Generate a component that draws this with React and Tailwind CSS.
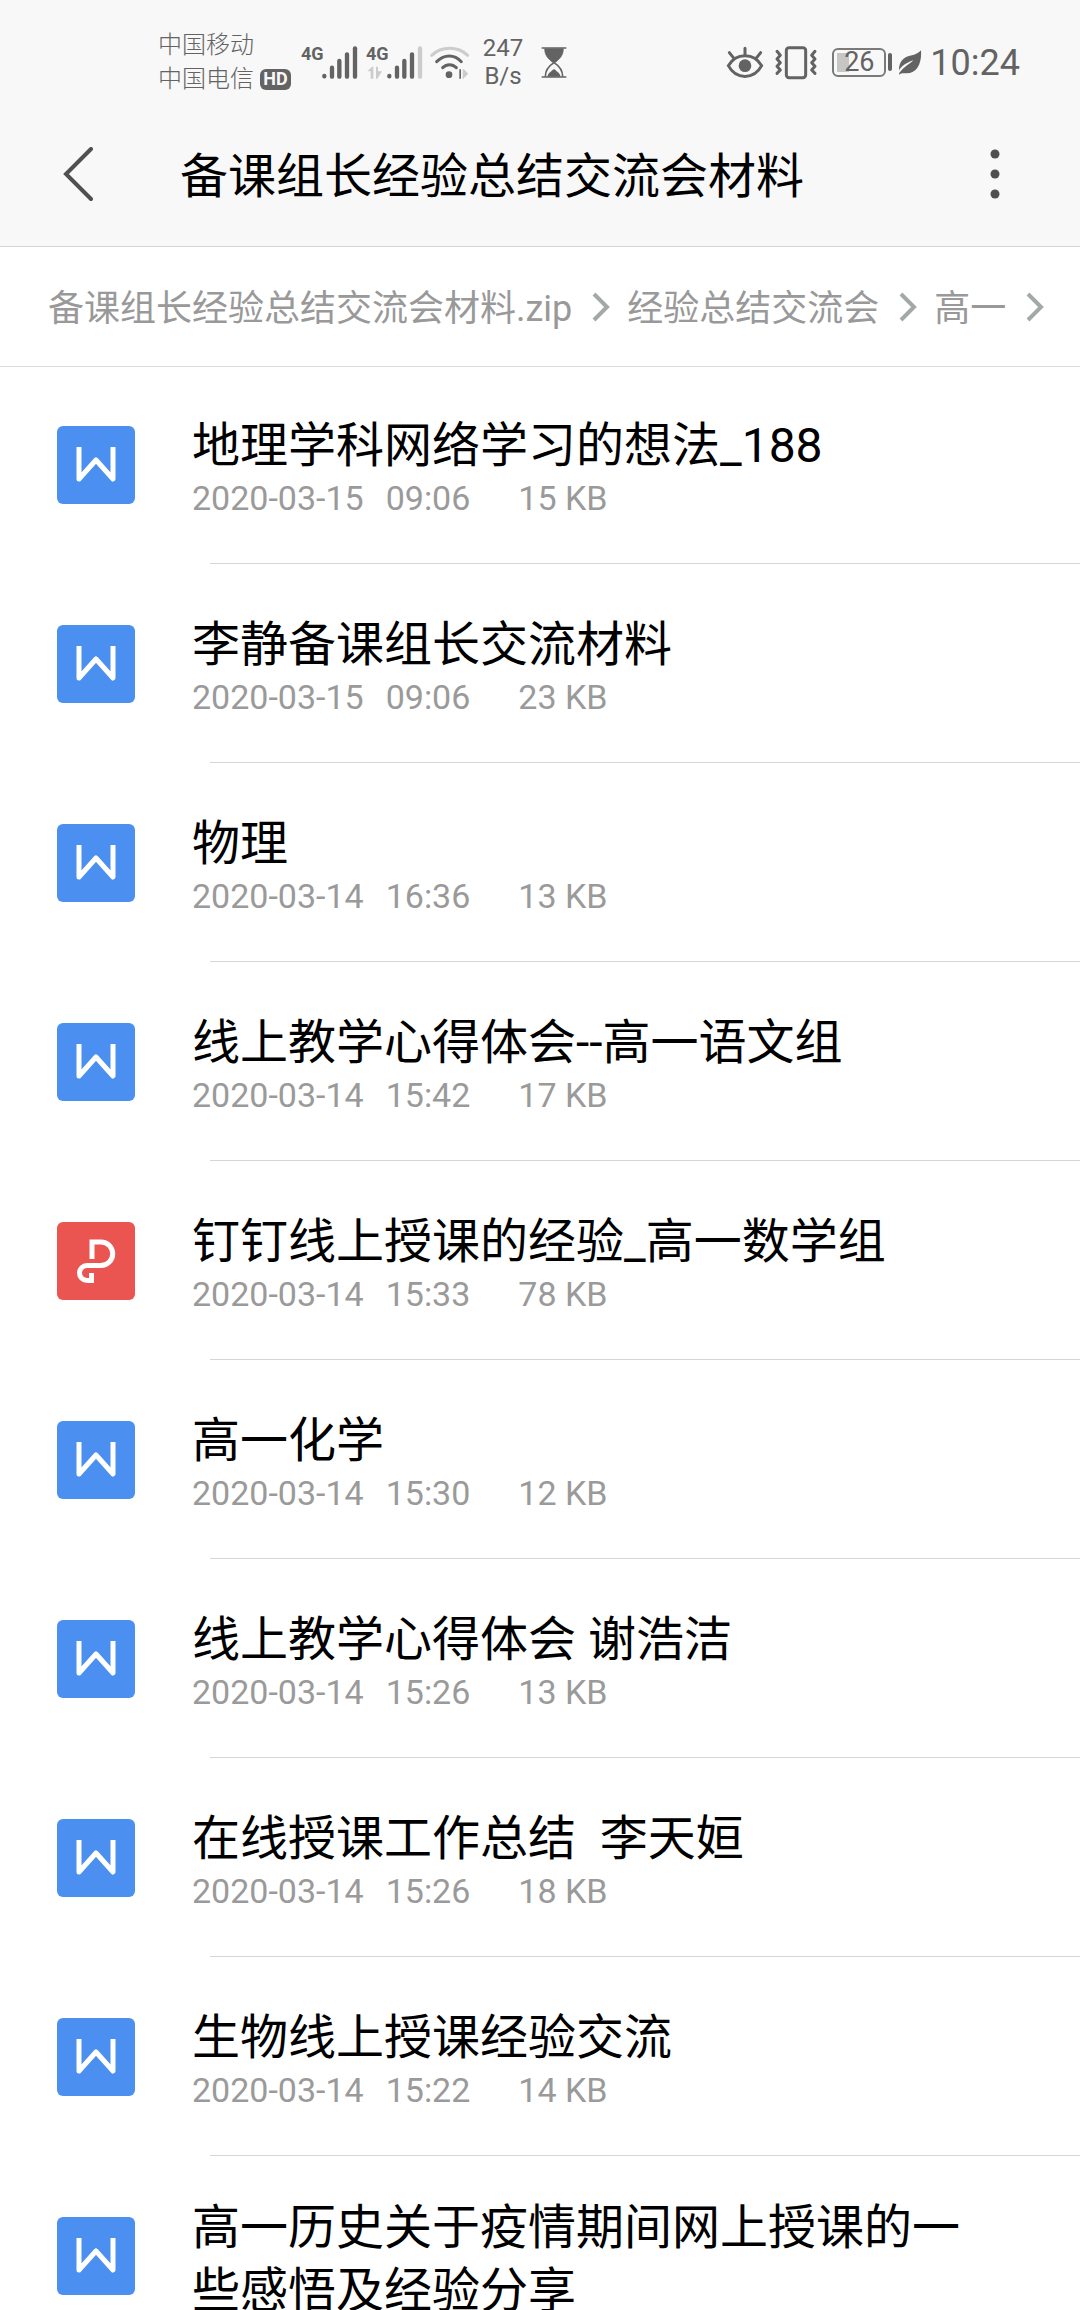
import { useState } from "react";

const files = [
  { name: "地理学科网络学习的想法_188", date: "2020-03-15", time: "09:06", size: "15 KB", type: "doc" },
  { name: "李静备课组长交流材料", date: "2020-03-15", time: "09:06", size: "23 KB", type: "doc" },
  { name: "物理", date: "2020-03-14", time: "16:36", size: "13 KB", type: "doc" },
  { name: "线上教学心得体会--高一语文组", date: "2020-03-14", time: "15:42", size: "17 KB", type: "doc" },
  { name: "钉钉线上授课的经验_高一数学组", date: "2020-03-14", time: "15:33", size: "78 KB", type: "pdf" },
  { name: "高一化学", date: "2020-03-14", time: "15:30", size: "12 KB", type: "doc" },
  { name: "线上教学心得体会 谢浩洁", date: "2020-03-14", time: "15:26", size: "13 KB", type: "doc" },
  { name: "在线授课工作总结  李天姮", date: "2020-03-14", time: "15:26", size: "18 KB", type: "doc" },
  { name: "生物线上授课经验交流", date: "2020-03-14", time: "15:22", size: "14 KB", type: "doc" },
  { name: "高一历史关于疫情期间网上授课的一些感悟及经验分享", type: "doc" },
];

const crumbs = ["备课组长经验总结交流会材料.zip", "经验总结交流会", "高一"];

const SignalBars = ({ weak }) => (
  <svg className="w-[37px] h-[35px]" viewBox="0 0 111 105" fill="none" stroke="#636363" strokeWidth="13" strokeLinecap="round">
    <path d="M10 93V94M33 68V95M55 48V95M78 28V95" />
    <path d="M102 10V95" stroke={weak ? "#cccccc" : "#636363"} />
  </svg>
);

const WifiIcon = () => (
  <svg className="w-[41px] h-[35px]" viewBox="0 0 123 105" fill="none" strokeLinecap="round" strokeWidth="9">
    <path d="M8 31C38 3 86 3 116 31" stroke="#cccccc" />
    <path d="M23 50C46 27 76 27 97 50M41 68C53 56 70 56 82 68" stroke="#636363" />
    <circle cx="60" cy="89" r="10" fill="#636363" />
    <path d="M78 86L91 73V101H96V73H91Z" fill="#636363" />
    <path d="M118 86L105 73H101V101H105V99Z" fill="#cccccc" />
  </svg>
);

const HourglassIcon = () => (
  <svg className="w-[28px] h-[33px]" viewBox="0 0 84 99" fill="none" stroke="#636363" strokeWidth="5">
    <path d="M5 6H79M5 93H79" />
    <path d="M14 8H70C70 30 58 38 47 49H37C26 38 14 30 14 8Z" fill="#636363" strokeWidth="2" />
    <path d="M42 50C26 60 16 72 16 92M42 50C58 60 68 72 68 92" />
    <path d="M22 92C25 80 34 76 42 69C50 76 59 80 62 92Z" fill="#636363" stroke="none" />
  </svg>
);

const EyeIcon = () => (
  <svg className="w-[38px] h-[35px]" viewBox="0 0 114 105" fill="none" stroke="#636363" strokeWidth="9" strokeLinecap="round">
    <path d="M7 62C30 22 84 22 107 62C84 105 30 105 7 62Z" />
    <circle cx="57" cy="62" r="19" fill="#636363" stroke="none" />
    <path d="M57 10V28M10 23L22 38M104 23L92 38" />
  </svg>
);

const VibrateIcon = () => (
  <svg className="w-[44px] h-[35px]" viewBox="0 0 132 105" fill="none" stroke="#636363" strokeWidth="9" strokeLinecap="round" strokeLinejoin="round">
    <rect x="37" y="8" width="58" height="90" rx="8" />
    <path d="M9 19L19 31L9 42L19 53L9 64L19 75L9 85M123 19L113 31L123 42L113 53L123 64L113 75L123 85" />
  </svg>
);

const LeafIcon = () => (
  <svg className="w-[24px] h-[25px]" viewBox="0 0 72 75">
    <path d="M69 1C72 38 58 72 22 70C15 69 8 70 4 74C-1 44 10 20 42 16C54 14 62 8 69 1Z" fill="#636363" />
    <path d="M2 62C14 44 28 38 46 31C34 43 20 48 4 69Z" fill="#f8f8f8" />
  </svg>
);

const Chevron = () => (
  <svg className="w-[18px] h-[30px] shrink-0" viewBox="0 0 18 30" fill="none" stroke="#a3a8a9" strokeWidth="4">
    <path d="M2 2L15 15L2 28" />
  </svg>
);

const FileIcon = ({ type }) =>
  type === "pdf" ? (
    <svg className="w-[78px] h-[78px] shrink-0 mt-[21px]" viewBox="0 0 78 78" fill="none" stroke="#fff" strokeWidth="5">
      <rect width="78" height="78" rx="6" fill="#ea5552" stroke="none" />
      <path d="M35 37V20H44A11.500 11.500 0 0 1 44 43.500H30A7.500 7.500 0 0 0 30 58.500H34.500V51" />
    </svg>
  ) : (
    <svg className="w-[78px] h-[78px] shrink-0 mt-[21px]" viewBox="0 0 78 78" fill="none" stroke="#fff" strokeWidth="5">
      <rect width="78" height="78" rx="6" fill="#4b90f0" stroke="none" />
      <path d="M22 21V53L39 34L56 53V21" strokeLinejoin="round" />
    </svg>
  );

const StatusBar = () => (
  <div className="flex items-center justify-between h-[104px] pt-5 pl-[158px] pr-[60px] text-[#636363]">
    <div className="flex items-center">
      <div className="text-2xl leading-[34px] font-light">
        <p>中国移动</p>
        <div className="flex items-center gap-1.5">
          <span>中国电信</span>
          <span className="flex items-center justify-center w-[31px] h-[21px] rounded-md bg-[#636363] text-[#f8f8f8] text-lg leading-none font-bold">
            HD
          </span>
        </div>
      </div>

      <div className="flex items-center ml-2.5">
        <span className="w-5 h-[35px] text-lg leading-[18px] font-bold font-['Liberation_Sans_Narrow',Roboto,sans-serif]">4G</span>
        <SignalBars />
      </div>

      <div className="flex items-center ml-2">
        <div className="flex flex-col w-5 h-[35px]">
          <span className="text-lg leading-[18px] font-bold font-['Liberation_Sans_Narrow',Roboto,sans-serif]">4G</span>
          <svg className="w-[17px] h-[14px] mt-[3px]" viewBox="0 0 51 42" fill="#cccccc">
            <path d="M4 16L18 2H22V38H14V16ZM30 2H36V16H48L34 38H30Z" />
          </svg>
        </div>
        <SignalBars weak />
      </div>

      <div className="ml-1.5">
        <WifiIcon />
      </div>
      <div className="ml-3 w-[42px] text-2xl leading-7 text-center">
        <p>247</p>
        <p>B/s</p>
      </div>
      <div className="ml-4">
        <HourglassIcon />
      </div>
    </div>

    <div className="flex items-center">
      <EyeIcon />
      <div className="ml-2.5">
        <VibrateIcon />
      </div>
      <div className="flex items-center gap-0.5 ml-[14px]">
        <div className="relative w-[54px] h-[29px] p-[3px] border-2 border-[#7a7a7a] rounded-md">
          <div className="w-[12px] h-full bg-[#c6c6c6]"></div>
          <span className="absolute inset-0 flex items-center justify-center text-[27px] leading-none">26</span>
        </div>
        <div className="w-1 h-[18px] rounded-sm bg-[#636363]"></div>
      </div>
      <div className="ml-1.5">
        <LeafIcon />
      </div>
      <span className="ml-2 pt-0.5 text-4xl leading-10">10:24</span>
    </div>
  </div>
);

const FileRow = ({ file, selected, onSelect }) => (
  <li>
    <button
      type="button"
      aria-pressed={selected}
      onClick={onSelect}
      className="w-full flex items-start gap-[57px] pt-10 pb-[33px] pl-[57px] pr-[110px] text-left"
    >
      <FileIcon type={file.type} />
      <div className="flex-1 min-h-[125px] flex flex-col justify-center">
        <p className="text-5xl leading-[63px] text-black whitespace-pre-wrap">{file.name}</p>
        <div className="flex h-[44px] text-[34px] leading-[42px] text-[#9a9a9a]">
          <span>{file.date}</span>
          <span className="ml-[22px]">{file.time}</span>
          <span className="ml-12">{file.size}</span>
        </div>
      </div>
    </button>
    <div className="ml-[210px] h-px bg-[#d6d6d6]"></div>
  </li>
);

const App = () => {
  const [selected, setSelected] = useState(null);

  return (
    <div className="h-screen flex flex-col overflow-hidden bg-white font-[Roboto,'Noto_Sans_CJK_SC',sans-serif]">
      {/* Status bar + title */}
      <header className="shrink-0 bg-[#f8f8f8] border-b border-[#d6d6d6]">
        <StatusBar />
        <div className="flex items-center h-[142px] pl-[56px] pr-[64px]">
          <button type="button" aria-label="返回" className="w-[40px] h-[60px] flex items-center">
            <svg className="w-[40px] h-[56px]" viewBox="0 0 40 56" fill="none" stroke="#505050" strokeWidth="4">
              <path d="M35 2L10 27L35 52" strokeLinecap="round" />
            </svg>
          </button>
          <h1 className="flex-1 ml-[84px] pt-0.5 text-5xl leading-[63px] text-black">备课组长经验总结交流会材料</h1>
          <button type="button" aria-label="更多" className="w-[42px] h-[60px] flex items-center justify-center">
            <svg className="w-[10px] h-[52px]" viewBox="0 0 10 52" fill="#505050">
              <circle cx="5" cy="5" r="4.500" />
              <circle cx="5" cy="25" r="4.500" />
              <circle cx="5" cy="45" r="4.500" />
            </svg>
          </button>
        </div>
      </header>

      {/* Breadcrumb */}
      <nav className="shrink-0 h-[120px] flex items-center pl-12 border-b border-[#dcdcdc] text-4xl text-[#999999] whitespace-nowrap">
        {crumbs.map((crumb) => (
          <div key={crumb} className="flex items-center">
            <a href="#" className="pt-1">{crumb}</a>
            <div className="ml-5 mr-[17px]">
              <Chevron />
            </div>
          </div>
        ))}
      </nav>

      {/* File list */}
      <ul className="flex-1 -mt-0.5 overflow-y-auto [scrollbar-width:none]">
        {files.map((file, i) => (
          <FileRow key={file.name} file={file} selected={selected === i} onSelect={() => setSelected(i)} />
        ))}
      </ul>
    </div>
  );
};

export default App;
